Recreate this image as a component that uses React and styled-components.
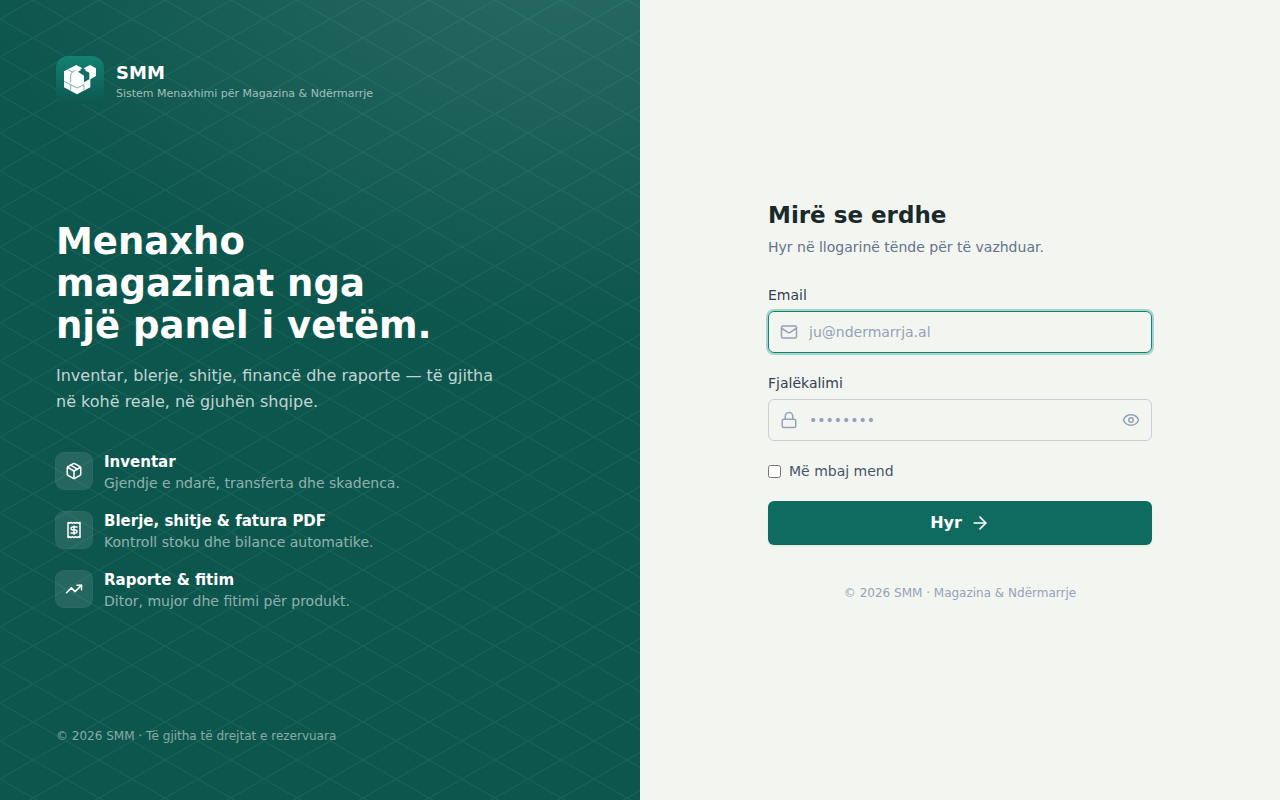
import React, { useState } from 'react';
import styled, { createGlobalStyle } from 'styled-components';
import { ArrowRight, Eye, EyeOff, Lock, Mail, Package, Receipt, TrendingUp } from 'lucide-react';

const features = [
	{ icon: Package, title: 'Inventar', text: 'Gjendje e ndarë, transferta dhe skadenca.' },
	{ icon: Receipt, title: 'Blerje, shitje & fatura PDF', text: 'Kontroll stoku dhe bilance automatike.' },
	{ icon: TrendingUp, title: 'Raporte & fitim', text: 'Ditor, mujor dhe fitimi për produkt.' },
];

const Logo = () => (
	<LogoBox>
		<svg width='48' height='48' viewBox='0 0 144 144' aria-hidden='true'>
			<path
				fill='#fff'
				d='M24 46 61 27 79 37 72 41 82 46 90 42 83 37 102 27 120 37V60L103 70V94L63 115 24 94Z'
			/>
			<path fill='#0f6d61' d='M66 47 80 40 100 50V70L84 79V59Z' />
			<path
				fill='none'
				stroke='#0f6d61'
				strokeWidth='1.6'
				d='M37 42 49 48 44 57V80M49 48 58 43M24 76 44 86V103M44 86 63 96 84 86V102'
			/>
		</svg>
	</LogoBox>
);

const LoginForm = () => {
	const [showPassword, setShowPassword] = useState(false);

	return (
		<Form onSubmit={(event) => event.preventDefault()}>
			<FormTitle>Mirë se erdhe</FormTitle>
			<FormIntro>Hyr në llogarinë tënde për të vazhduar.</FormIntro>

			<Field>
				<Label htmlFor='email'>Email</Label>
				<InputBox>
					<Mail size={18} strokeWidth={2} />
					<Input id='email' type='email' placeholder='ju@ndermarrja.al' autoFocus />
				</InputBox>
			</Field>

			<Field>
				<Label htmlFor='password'>Fjalëkalimi</Label>
				<InputBox>
					<Lock size={18} strokeWidth={2} />
					<Input
						id='password'
						type={showPassword ? 'text' : 'password'}
						placeholder='••••••••'
					/>
					<EyeButton
						type='button'
						aria-label='Shfaq fjalëkalimin'
						onClick={() => setShowPassword(!showPassword)}
					>
						{showPassword ? <EyeOff size={18} strokeWidth={2} /> : <Eye size={18} strokeWidth={2} />}
					</EyeButton>
				</InputBox>
			</Field>

			<RememberLabel>
				<Checkbox type='checkbox' />
				Më mbaj mend
			</RememberLabel>

			<SubmitButton type='submit'>
				Hyr
				<ArrowRight size={20} strokeWidth={2} />
			</SubmitButton>

			<FormFooter>© 2026 SMM · Magazina & Ndërmarrje</FormFooter>
		</Form>
	);
};

export default function App() {
	return (
		<>
			<GlobalStyle />
			<Page>
				<BrandPanel>
					<Lattice aria-hidden='true'>
						<defs>
							<pattern id='lattice' width='66' height='38' patternUnits='userSpaceOnUse'>
								<path
									d='M-33 0 33 38 99 0M-33 38 33 0 99 38'
									fill='none'
									stroke='#a7f3d0'
									strokeWidth='1.3'
								/>
							</pattern>
						</defs>
						<rect width='100%' height='100%' fill='url(#lattice)' />
					</Lattice>

					<Brand>
						<Logo />
						<div>
							<BrandName>SMM</BrandName>
							<BrandTagline>Sistem Menaxhimi për Magazina & Ndërmarrje</BrandTagline>
						</div>
					</Brand>

					<Pitch>
						<Headline>
							Menaxho
							<br />
							magazinat nga
							<br />
							një panel i vetëm.
						</Headline>
						<Lead>
							Inventar, blerje, shitje, financë dhe raporte — të gjitha në kohë reale, në gjuhën shqipe.
						</Lead>
						<FeatureList>
							{features.map(({ icon: Icon, title, text }) => (
								<Feature key={title}>
									<FeatureIcon>
										<Icon size={18} strokeWidth={2} />
									</FeatureIcon>
									<div>
										<FeatureTitle>{title}</FeatureTitle>
										<FeatureText>{text}</FeatureText>
									</div>
								</Feature>
							))}
						</FeatureList>
					</Pitch>

					<Copyright>© 2026 SMM · Të gjitha të drejtat e rezervuara</Copyright>
				</BrandPanel>

				<FormPanel>
					<LoginForm />
				</FormPanel>
			</Page>
		</>
	);
}

const GlobalStyle = createGlobalStyle`
	* {
		box-sizing: border-box;
	}

	body {
		margin: 0;
		font-family: 'DejaVu Sans', sans-serif;
		font-size: 14px;
		line-height: 20px;
		background: #f3f5f0;
	}

	h1, h2, p, ul {
		margin: 0;
		padding: 0;
	}
`;

const Page = styled.main`
	display: grid;
	grid-template-columns: 1fr 1fr;
	min-height: 100vh;
`;

const BrandPanel = styled.section`
	position: relative;
	isolation: isolate;
	display: flex;
	flex-direction: column;
	justify-content: space-between;
	padding: 56px;
	color: #fff;
	background: radial-gradient(ellipse 95% 50% at 90% -8%, rgba(255, 255, 255, 0.12), transparent), #0d564d;
`;

const Lattice = styled.svg`
	position: absolute;
	inset: 0;
	z-index: -1;
	width: 100%;
	height: 100%;
	opacity: 0.07;
`;

const Brand = styled.header`
	display: flex;
	align-items: center;
	gap: 12px;
`;

const LogoBox = styled.div`
	width: 48px;
	height: 48px;
	border-radius: 12px;
	background: linear-gradient(#128273, #0d564d);

	svg {
		display: block;
	}
`;

const BrandName = styled.p`
	font-size: 18px;
	font-weight: bold;
	line-height: 28px;
`;

const BrandTagline = styled.p`
	font-size: 11px;
	line-height: 14px;
	color: rgba(255, 255, 255, 0.6);
`;

const Pitch = styled.div`
	max-width: 448px;
`;

const Headline = styled.h1`
	font-size: 37px;
	font-weight: bold;
	line-height: 42px;
`;

const Lead = styled.p`
	margin-top: 16px;
	font-size: 16px;
	line-height: 26px;
	color: rgba(255, 255, 255, 0.75);
`;

const FeatureList = styled.ul`
	display: flex;
	flex-direction: column;
	gap: 16px;
	margin-top: 36px;
	list-style: none;
`;

const Feature = styled.li`
	display: flex;
	align-items: flex-start;
	gap: 12px;
`;

const FeatureIcon = styled.span`
	display: flex;
	align-items: center;
	justify-content: center;
	width: 36px;
	height: 36px;
	margin-top: 2px;
	border-radius: 8px;
	background: rgba(255, 255, 255, 0.1);
	box-shadow: 0 0 0 1px rgba(255, 255, 255, 0.12);
`;

const FeatureTitle = styled.p`
	font-size: 15px;
	font-weight: bold;
	line-height: 22px;
`;

const FeatureText = styled.p`
	line-height: 21px;
	color: rgba(255, 255, 255, 0.55);
`;

const Copyright = styled.p`
	font-size: 12px;
	line-height: 16px;
	color: rgba(255, 255, 255, 0.5);
`;

const FormPanel = styled.section`
	display: flex;
	align-items: center;
	justify-content: center;
	padding: 32px;
`;

const Form = styled.form`
	display: flex;
	flex-direction: column;
	gap: 20px;
	width: 100%;
	max-width: 384px;
`;

const FormTitle = styled.h2`
	font-size: 23px;
	font-weight: bold;
	line-height: 32px;
	color: #1a2a2a;
`;

const FormIntro = styled.p`
	margin: -14px 0 8px;
	color: #64748b;
`;

const Field = styled.div`
	display: flex;
	flex-direction: column;
	gap: 6px;
`;

const Label = styled.label`
	color: #334155;
`;

/* icons sit over the input, the text starts after them */
const InputBox = styled.div`
	position: relative;
	display: flex;
	align-items: center;
	color: #94a3b8;

	> svg {
		position: absolute;
		left: 12px;
		pointer-events: none;
	}
`;

const Input = styled.input`
	width: 100%;
	height: 42px;
	padding: 0 40px;
	border: 1px solid #cbd0d8;
	border-radius: 6px;
	font: inherit;
	color: #1e293b;
	background: transparent;
	outline: none;

	&::placeholder {
		color: #94a3b8;
		opacity: 1;
	}

	&:focus {
		border-color: #128273;
		box-shadow: 0 0 0 2px #a6d5cc;
	}
`;

const EyeButton = styled.button`
	position: absolute;
	right: 12px;
	display: flex;
	padding: 0;
	border: 0;
	color: inherit;
	background: none;
	cursor: pointer;
`;

const RememberLabel = styled.label`
	display: flex;
	align-items: center;
	align-self: flex-start;
	gap: 8px;
	color: #475569;
`;

const Checkbox = styled.input`
	width: 13px;
	height: 13px;
	margin: 0;
`;

const SubmitButton = styled.button`
	display: flex;
	align-items: center;
	justify-content: center;
	gap: 8px;
	height: 44px;
	border: 0;
	border-radius: 6px;
	font: inherit;
	font-size: 16px;
	font-weight: bold;
	color: #fff;
	background: #0f6b60;
	box-shadow: 0 1px 2px rgba(0, 0, 0, 0.08);
	cursor: pointer;
`;

const FormFooter = styled.p`
	margin-top: 20px;
	font-size: 12px;
	line-height: 16px;
	text-align: center;
	color: #94a3b8;
`;
